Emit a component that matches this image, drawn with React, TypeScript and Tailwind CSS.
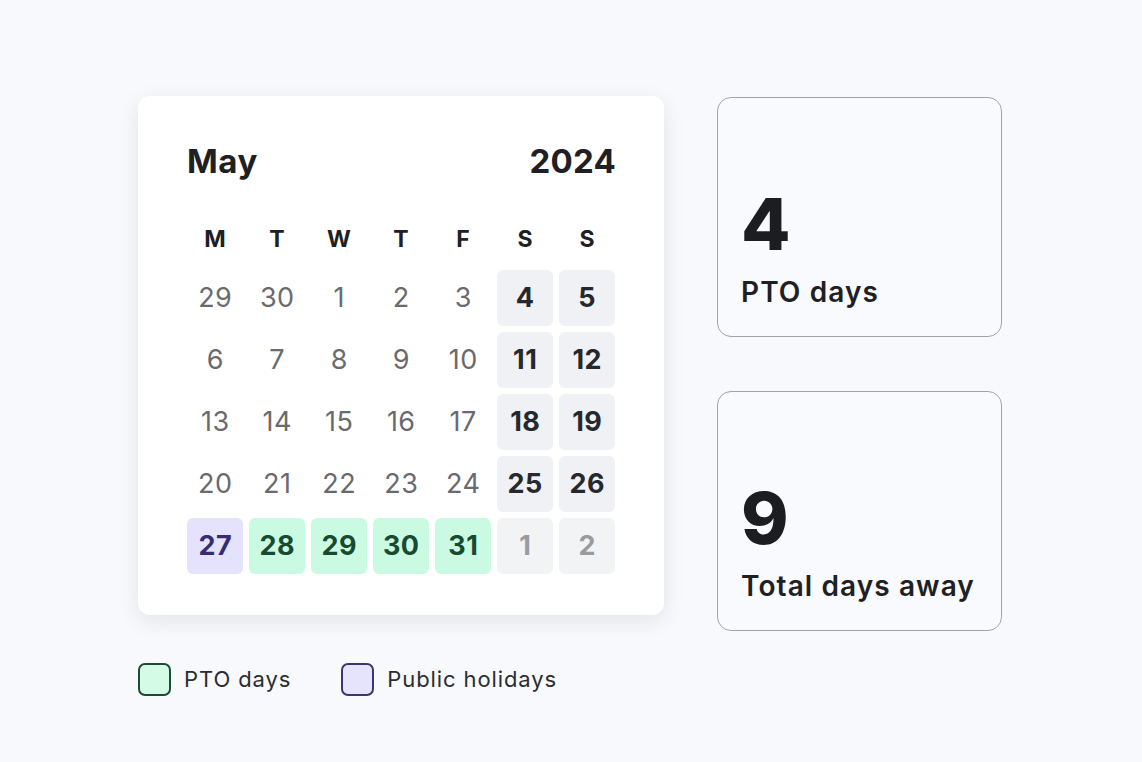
import React from "react";

type Kind = "normal" | "weekend" | "pto" | "holiday" | "next";

const rows: [string, Kind][][] = [
  [["29","normal"],["30","normal"],["1","normal"],["2","normal"],["3","normal"],["4","weekend"],["5","weekend"]],
  [["6","normal"],["7","normal"],["8","normal"],["9","normal"],["10","normal"],["11","weekend"],["12","weekend"]],
  [["13","normal"],["14","normal"],["15","normal"],["16","normal"],["17","normal"],["18","weekend"],["19","weekend"]],
  [["20","normal"],["21","normal"],["22","normal"],["23","normal"],["24","normal"],["25","weekend"],["26","weekend"]],
  [["27","holiday"],["28","pto"],["29","pto"],["30","pto"],["31","pto"],["1","next"],["2","next"]],
];

const cls: Record<Kind, string> = {
  normal: "text-[#6a6a6e] font-normal",
  weekend: "bg-[#eff1f4] text-[#25282c] font-bold",
  pto: "bg-[#cafbe2] text-[#174a31] font-bold",
  holiday: "bg-[#e4e2fd] text-[#362c72] font-bold",
  next: "bg-[#f2f3f5] text-[#9a9b9e] font-bold",
};

const days = ["M", "T", "W", "T", "F", "S", "S"];

export default function App() {
  return (
    <div
      className="w-[1142px] h-[762px] bg-[#f8f9fc] flex pt-[96px] pl-[138px]"
      style={{ fontFamily: "Inter, 'Noto Sans', sans-serif" }}
    >
      <div className="flex flex-col w-[526px]">
        <div className="bg-white rounded-[12px] shadow-[0_6px_22px_rgba(20,25,40,0.09)] px-[49px] pt-[46px] pb-[41px]">
          <div className="flex justify-between items-center h-[40px] text-[33px] font-bold text-[#1e2023] -mr-[1px]">
            <span className="tracking-[0.6px]">May</span>
            <span className="tracking-[0.2px]">2024</span>
          </div>
          <div className="grid grid-cols-7 gap-x-[6px] mt-[41px] mb-[15px]">
            {days.map((d, i) => (
              <div key={i} className="h-[32px] flex items-center justify-center text-[23px] font-bold text-[#1e2023]">
                {d}
              </div>
            ))}
          </div>
          <div className="grid grid-cols-7 gap-[6px]">
            {rows.flat().map(([n, k], i) => (
              <div
                key={i}
                className={`h-[56px] rounded-[6px] flex items-center justify-center text-[27px] ${cls[k]}`}
              >
                <span className="tracking-[0.5px] -mr-[0.5px]">{n}</span>
              </div>
            ))}
          </div>
        </div>
        <div className="flex items-center mt-[48px] text-[22px] text-[#2b2d31] tracking-[0.9px]">
          <div className="w-[33px] h-[33px] rounded-[7px] border-2 border-[#1e4a35] bg-[#d3fbe6]" />
          <span className="ml-[13px]">PTO days</span>
          <div className="w-[33px] h-[33px] rounded-[7px] border-2 border-[#3c3670] bg-[#e6e4fd] ml-[50px]" />
          <span className="ml-[13px]">Public holidays</span>
        </div>
      </div>
      <div className="flex flex-col ml-[53px] gap-[54px] pt-[1px]">
        {[
          ["4", "PTO days"],
          ["9", "Total days away"],
        ].map(([n, l]) => (
          <div
            key={l}
            className="w-[285px] h-[240px] rounded-[14px] border-[1.5px] border-[#a3a4a8] bg-[#f9fafd] flex flex-col justify-end pl-[23px] pb-[28px]"
          >
            <div className="text-[72px] leading-[72px] font-extrabold text-[#1b1d20]">{n}</div>
            <div className="mt-[16px] text-[28px] leading-[32px] font-semibold text-[#1e2023] tracking-[1.1px]">{l}</div>
          </div>
        ))}
      </div>
    </div>
  );
}
